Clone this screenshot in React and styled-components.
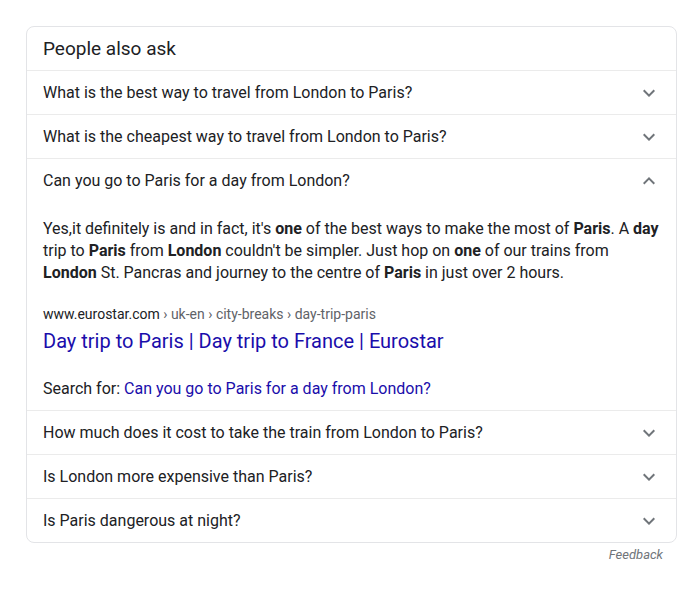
import React from 'react'
import styled, { createGlobalStyle } from 'styled-components'

const GlobalStyle = createGlobalStyle`
  body {
    margin: 0;
    background: #fff;
    font-family: Roboto, Arial, sans-serif;
    color: #202124;
  }
`

const questions = [
  { text: 'What is the best way to travel from London to Paris?' },
  { text: 'What is the cheapest way to travel from London to Paris?' },
  { text: 'Can you go to Paris for a day from London?', open: true },
  { text: 'How much does it cost to take the train from London to Paris?' },
  { text: 'Is London more expensive than Paris?' },
  { text: 'Is Paris dangerous at night?' },
]

function Chevron({ up }) {
  return (
    <Icon viewBox="0 0 24 24" $up={up}>
      <path d="M16.59 8.59L12 13.17 7.41 8.59 6 10l6 6 6-6z" />
    </Icon>
  )
}

function App() {
  return (
    <>
      <GlobalStyle />
      <Page>
        <Card>
          <Heading>People also ask</Heading>
          {questions.map((q) => (
            <Item key={q.text}>
              <Question>
                <span>{q.text}</span>
                <Chevron up={q.open} />
              </Question>
              {q.open && (
                <Answer>
                  <Snippet>
                    Yes,it definitely is and in fact, it's <b>one</b> of the best ways to make the
                    most of <b>Paris</b>. A <b>day</b> trip to <b>Paris</b> from <b>London</b>{' '}
                    couldn't be simpler. Just hop on <b>one</b> of our trains from <b>London</b> St.
                    Pancras and journey to the centre of <b>Paris</b> in just over 2 hours.
                  </Snippet>
                  <Cite>
                    www.eurostar.com <Crumbs>› uk-en › city-breaks › day-trip-paris</Crumbs>
                  </Cite>
                  <ResultTitle href="#">Day trip to Paris | Day trip to France | Eurostar</ResultTitle>
                  <SearchFor>
                    Search for: <SearchLink href="#">Can you go to Paris for a day from London?</SearchLink>
                  </SearchFor>
                </Answer>
              )}
            </Item>
          ))}
        </Card>
        <Feedback>Feedback</Feedback>
      </Page>
    </>
  )
}

const Page = styled.div`
  width: 651px;
  padding: 26px 0 0 26px;
`

const Card = styled.div`
  border: 1px solid #e3e4e7;
  border-radius: 8px;
  overflow: hidden;
`

const Heading = styled.div`
  height: 43px;
  display: flex;
  align-items: center;
  padding: 0 16px;
  font-size: 19px;
  color: #202124;
`

const Item = styled.div`
  border-top: 1px solid #ebebeb;
`

const Question = styled.div`
  height: 43px;
  display: flex;
  align-items: center;
  justify-content: space-between;
  padding: 0 15px 0 16px;
  font-size: 16px;
  color: #202124;
`

const Icon = styled.svg`
  width: 24px;
  height: 24px;
  fill: #70757a;
  transform: ${(p) => (p.$up ? 'rotate(180deg)' : 'none')};
`

const Answer = styled.div`
  padding: 16px 16px 10px;
`

const Snippet = styled.div`
  font-size: 16px;
  line-height: 22px;
  color: #202124;

  b {
    font-weight: 700;
  }
`

const Cite = styled.div`
  margin-top: 20px;
  font-size: 14px;
  line-height: 20px;
  color: #202124;
`

const Crumbs = styled.span`
  color: #5f6368;
`

const ResultTitle = styled.a`
  display: block;
  margin-top: 4px;
  font-size: 20px;
  line-height: 26px;
  color: #1a0dab;
  text-decoration: none;
`

const SearchFor = styled.div`
  margin-top: 24px;
  font-size: 16px;
  line-height: 22px;
  color: #202124;
`

const SearchLink = styled.a`
  color: #1a0dab;
  text-decoration: none;
`

const Feedback = styled.div`
  text-align: right;
  padding: 4px 14px 0 0;
  font-size: 13px;
  line-height: 16px;
  font-style: italic;
  color: #70757a;
`

export default App
